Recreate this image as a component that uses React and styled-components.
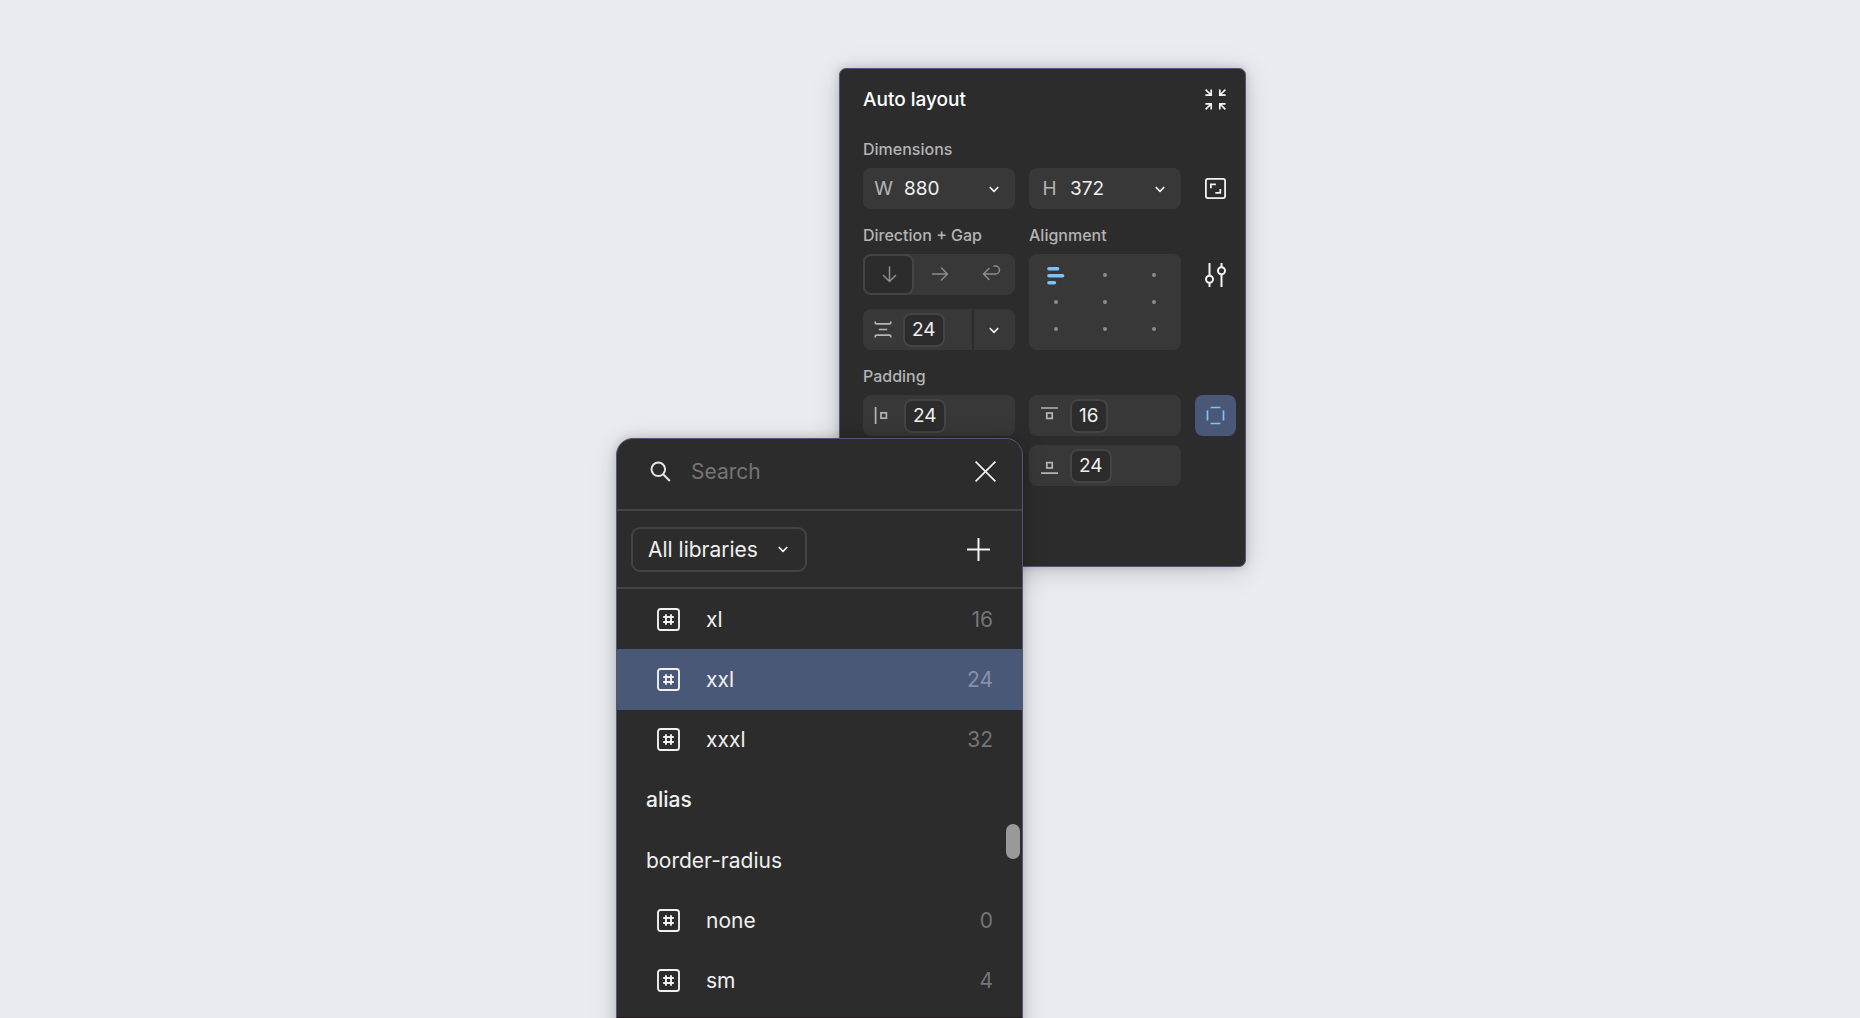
import React, { useState } from "react";
import styled, { createGlobalStyle, css } from "styled-components";

const color = {
  canvas: "#ebecf1",
  panel: "#2c2c2c",
  field: "#383838",
  line: "#444444",
  outline: "#56547a",
  text: "#f0f0f0",
  label: "#b4b4b4",
  muted: "#757575",
  icon: "#8c8c8c",
  selected: "#4a5878",
  accent: "#7cc4f8",
};

const GlobalStyle = createGlobalStyle`
  *, *::before, *::after { box-sizing: border-box; }
  body {
    margin: 0;
    background: ${color.canvas};
    font-family: Inter, "Liberation Sans", sans-serif;
    color: ${color.text};
  }
  button, input, select { font: inherit; color: inherit; }
  svg { display: block; flex: none; }
`;

const Canvas = styled.main`
  height: 100vh;
  overflow: hidden;
  padding-top: 68px;
  background: ${color.canvas};
`;

/* Both windows share one grid cell so that the picker overlaps the panel. */
const Stage = styled.div`
  display: grid;
  width: 632px;
  margin: 0 auto;
  padding-left: 2px;
`;

const windowFrame = css`
  grid-area: 1 / 1;
  width: 407px;
  background: ${color.panel};
  border: 1px solid ${color.outline};
  box-shadow: 0 4px 28px rgba(0, 0, 0, 0.16), 0 0 10px rgba(0, 0, 0, 0.16);
`;

const Panel = styled.section`
  ${windowFrame}
  justify-self: end;
  align-self: start;
  display: flex;
  flex-direction: column;
  gap: 7px;
  padding: 0 9px 80px 23px;
  border-radius: 7px;
`;

const PanelHeader = styled.header`
  display: flex;
  align-items: center;
  justify-content: space-between;
  height: 60px;
  margin-bottom: -6px;
`;

const Title = styled.h2`
  margin: 0;
  font-size: 19px;
  font-weight: 500;
  color: #ffffff;
`;

const Columns = styled.div`
  display: grid;
  grid-template-columns: minmax(0, 1fr) minmax(0, 1fr) 41px;
  column-gap: 14px;
`;

const Group = styled.div`
  display: flex;
  flex-direction: column;
  gap: ${(p) => p.$gap || 0}px;
`;

const Label = styled.div`
  height: 38px;
  font-size: 16px;
  line-height: 38px;
  font-weight: 500;
  white-space: nowrap;
  color: ${color.label};
`;

const Spacer = styled.div`
  height: 38px;
`;

const iconButton = css`
  display: flex;
  align-items: center;
  justify-content: center;
  padding: 0;
  border: 0;
  background: none;
  cursor: pointer;
`;

const IconButton = styled.button`
  ${iconButton}
  width: 41px;
  height: 41px;
  border-radius: 8px;
  color: ${(p) => (p.$active ? color.accent : "#f2f2f2")};
  background: ${(p) => (p.$active ? color.selected : "none")};
`;

const Field = styled.div`
  display: flex;
  align-items: center;
  height: 41px;
  overflow: hidden;
  border-radius: 8px;
  background: ${color.field};
`;

const Prefix = styled.label`
  display: flex;
  flex: none;
  justify-content: center;
  width: 41px;
  font-size: 19px;
  color: ${color.label};
`;

const NumberInput = styled.input`
  flex: 1;
  width: 0;
  min-width: 0;
  padding: 0;
  border: 0;
  outline: 0;
  background: none;
  font-size: 19px;
`;

const FieldMenu = styled.button`
  ${iconButton}
  flex: none;
  width: 43px;
  height: 41px;
  padding-right: 2px;
  border-left: 2px solid ${(p) => (p.$divided ? color.panel : "transparent")};
  margin-left: auto;
`;

const Token = styled.button`
  height: 34px;
  padding: 0 7px;
  border: 2px solid ${color.line};
  border-radius: 8px;
  background: ${color.panel};
  font-size: 19px;
  line-height: 30px;
  cursor: pointer;
`;

const Segments = styled.div`
  display: grid;
  grid-template-columns: repeat(3, 1fr);
  height: 41px;
  border-radius: 8px;
  background: ${color.field};
`;

const Segment = styled.button`
  ${iconButton}
  padding-left: 2px;
  border: 2px solid ${(p) => (p.$active ? color.line : "transparent")};
  border-radius: 8px;
  background: ${(p) => (p.$active ? color.panel : "none")};
  color: ${color.icon};
`;

const AlignGrid = styled.div`
  display: grid;
  grid-template-columns: repeat(3, 1fr);
  grid-template-rows: repeat(3, 1fr);
  height: 96px;
  padding: 8px 2px;
  border-radius: 8px;
  background: ${color.field};
`;

const AlignCell = styled.button`
  ${iconButton}
`;

const Dot = styled.span`
  width: 4px;
  height: 4px;
  border-radius: 2px;
  background: ${color.icon};
`;

const Picker = styled.section`
  ${windowFrame}
  justify-self: start;
  margin-top: 370px;
  border-radius: 17px;
  overflow: hidden;
`;

const SearchBar = styled.div`
  display: flex;
  align-items: center;
  height: 72px;
  padding: 0 16px 6px 33px;
  border-bottom: 2px solid ${color.line};
`;

const SearchLabel = styled.label`
  display: flex;
  width: 41px;
  color: #e4e4e4;
`;

const SearchInput = styled.input`
  flex: 1;
  min-width: 0;
  padding: 0;
  border: 0;
  outline: 0;
  background: none;
  font-size: 21px;
  &::placeholder { color: ${color.muted}; opacity: 1; }
`;

const ToolBar = styled.div`
  display: flex;
  align-items: center;
  justify-content: space-between;
  height: 78px;
  padding: 0 23px 0 14px;
  border-bottom: 2px solid ${color.line};
`;

const SelectBox = styled.div`
  display: grid;
  align-items: center;
  width: 176px;
  height: 45px;
  border: 2px solid ${color.line};
  border-radius: 9px;

  > * { grid-area: 1 / 1; }
  > svg { justify-self: end; margin-right: 14px; pointer-events: none; }
`;

const Select = styled.select`
  width: 100%;
  height: 100%;
  padding: 0 40px 0 15px;
  border: 0;
  outline: 0;
  background: none;
  appearance: none;
  font-size: 21px;
`;

const List = styled.ul`
  position: relative;
  display: grid;
  grid-auto-rows: 1fr;
  height: 422px;
  margin: 0;
  padding: 0;
  list-style: none;
`;

const Row = styled.li`
  display: flex;
  background: ${(p) => (p.$selected ? color.selected : "none")};
`;

const RowButton = styled.button`
  display: flex;
  flex: 1;
  align-items: center;
  padding: 0 29px 0 40px;
  border: 0;
  background: none;
  font-size: 21px;
  text-align: left;
  cursor: pointer;

  > svg { margin-right: 26px; }
`;

const Value = styled.span`
  margin-left: auto;
  color: ${(p) => (p.$selected ? "#8791a6" : color.muted)};
`;

const GroupName = styled.h3`
  margin: 0;
  align-self: center;
  padding-left: 29px;
  font-size: 21px;
  font-weight: ${(p) => (p.$strong ? 500 : 400)};
`;

const ScrollThumb = styled.li`
  position: absolute;
  top: 235px;
  right: 2px;
  width: 14px;
  height: 35px;
  border-radius: 7px;
  background: #999999;
`;

const Footer = styled.footer`
  height: 60px;
  margin-top: 6px;
  border-top: 1px solid #231d20;
`;

const Svg = ({ w, h = w, sw = 2, children, ...rest }) => (
  <svg width={w} height={h} viewBox={`0 0 ${w} ${h}`} fill="none" stroke="currentColor" strokeWidth={sw} aria-hidden="true" {...rest}>
    {children}
  </svg>
);

const Chevron = () => (
  <Svg w={16} sw={1.7} strokeLinecap="round" strokeLinejoin="round"><path d="M4.2 6.5l3.8 3.8 3.8-3.8" /></Svg>
);

const CollapseIcon = () => (
  <Svg w={21} sw={1.7}>
    <path d="M.6.6l5.4 5.4M6.2.4v5.8H.4M20.4.6L15 6M14.8.4v5.8h5.8M.6 20.4L6 15M6.2 20.6v-5.8H.4M20.4 20.4L15 15M14.8 20.6v-5.8h5.8" />
  </Svg>
);

const ResizeIcon = () => (
  <Svg w={21} sw={1.8}>
    <rect x="0.9" y="0.9" width="19.2" height="19.2" rx="2" />
    <path d="M5.9 10.2V6.4h5M10.3 14.8h5v-3.9" />
  </Svg>
);

const SlidersIcon = () => (
  <Svg w={21} h={24} sw={2}>
    <path d="M4.5 0v12.5M4.5 20v4M16.5 0v4M16.5 11.5V24" />
    <circle cx="4.5" cy="16.2" r="3.5" />
    <circle cx="16.5" cy="7.8" r="3.5" />
  </Svg>
);

const SidesIcon = () => (
  <Svg w={19} sw={1.7}>
    <path d="M4.6 1.5h9.8M4.6 17.5h9.8M1.5 4.6v9.8M17.5 4.6v9.8" />
  </Svg>
);

const DownIcon = () => (
  <Svg w={17} sw={1.5} strokeLinecap="round" strokeLinejoin="round"><path d="M8.5 1v14.5M2.5 9.5l6 6 6-6" /></Svg>
);

const RightIcon = () => (
  <Svg w={17} sw={1.5} strokeLinecap="round" strokeLinejoin="round"><path d="M1.5 8h15M10.5 2l6 6-6 6" /></Svg>
);

const WrapIcon = () => (
  <Svg w={21} h={19} sw={1.5} strokeLinecap="round" strokeLinejoin="round">
    <path d="M3.5 9H15.5a4 4 0 0 0 0-8H14M9 3.5L3.5 9l5.5 5.5" />
  </Svg>
);

const GapIcon = () => (
  <Svg w={40} sw={1.7} color={color.label}>
    <path d="M12.2 11.5v1q0 1.4 1.4 1.4h12.8q1.4 0 1.4-1.4v-1M12.2 27.5v-1q0-1.4 1.4-1.4h12.8q1.4 0 1.4 1.4v1M15.8 19.5h8.4" />
  </Svg>
);

const paddingPaths = {
  left: <><path d="M12.6 12v17" /><rect x="18" y="17.8" width="5.4" height="5.4" /></>,
  top: <><path d="M12 13h17" /><rect x="17.8" y="18" width="5.4" height="5.4" /></>,
  bottom: <><path d="M12 28.2h17" /><rect x="17.8" y="17.6" width="5.4" height="5.4" /></>,
  right: <><path d="M28.4 12v17" /><rect x="17.8" y="17.8" width="5.4" height="5.4" /></>,
};

const AlignBars = () => (
  <Svg w={18} h={20} sw={3.6} color={color.accent} strokeLinecap="round"><path d="M2 3.8h8.6M2 10.8h13.6M2 17.7h5.4" /></Svg>
);

const SearchIcon = () => (
  <Svg w={21} sw={2}><circle cx="8.3" cy="8.3" r="6.8" /><path d="M13.2 13.2l6.6 6.8" /></Svg>
);

const CloseIcon = () => (
  <Svg w={21} sw={1.7}><path d="M.6.6l19.8 19.8M20.4.6L.6 20.4" /></Svg>
);

const PlusIcon = () => (
  <Svg w={23} sw={2}><path d="M11.5 0v23M0 11.5h23" /></Svg>
);

const HashIcon = () => (
  <Svg w={23} sw={1.9}>
    <rect x="1" y="1" width="21" height="21" rx="2.6" />
    <path d="M9 6.2v10.6M14 6.2v10.6M6.2 9h10.6M6.2 14h10.6" />
  </Svg>
);

const Dimension = ({ id, name, letter, value }) => (
  <Field>
    <Prefix htmlFor={id}>{letter}</Prefix>
    <NumberInput id={id} defaultValue={value} aria-label={name} />
    <FieldMenu aria-label={`${name} options`}><Chevron /></FieldMenu>
  </Field>
);

const PaddingField = ({ side, value }) => (
  <Field>
    <Svg w={41} sw={1.7} color={color.label}>{paddingPaths[side]}</Svg>
    <Token aria-label={`Padding ${side}`}>{value}</Token>
  </Field>
);

const directions = [
  ["Vertical", DownIcon],
  ["Horizontal", RightIcon],
  ["Wrap", WrapIcon],
];

const spots = ["Top left", "Top center", "Top right", "Left", "Center", "Right", "Bottom left", "Bottom center", "Bottom right"];

const items = [
  { name: "xl", value: 16 },
  { name: "xxl", value: 24 },
  { name: "xxxl", value: 32 },
  { group: "alias", strong: true },
  { group: "border-radius" },
  { name: "none", value: 0 },
  { name: "sm", value: 4 },
];

export default function App() {
  const [direction, setDirection] = useState("Vertical");
  const [spot, setSpot] = useState("Top left");
  const [selected, setSelected] = useState("xxl");

  return (
    <Canvas>
      <GlobalStyle />
      <Stage>
        <Panel aria-label="Auto layout">
          <PanelHeader>
            <Title>Auto layout</Title>
            <IconButton aria-label="Collapse"><CollapseIcon /></IconButton>
          </PanelHeader>

          <Columns>
            <Group>
              <Label>Dimensions</Label>
              <Dimension id="width" name="Width" letter="W" value="880" />
            </Group>
            <Group>
              <Spacer />
              <Dimension id="height" name="Height" letter="H" value="372" />
            </Group>
            <Group>
              <Spacer />
              <IconButton aria-label="Resize to fit"><ResizeIcon /></IconButton>
            </Group>
          </Columns>

          <Columns>
            <Group>
              <Label>Direction + Gap</Label>
              <Group $gap={14}>
                <Segments>
                  {directions.map(([name, Icon]) => (
                    <Segment key={name} aria-label={name} aria-pressed={direction === name} $active={direction === name} onClick={() => setDirection(name)}>
                      <Icon />
                    </Segment>
                  ))}
                </Segments>
                <Field>
                  <GapIcon />
                  <Token aria-label="Gap">24</Token>
                  <FieldMenu $divided aria-label="Gap options"><Chevron /></FieldMenu>
                </Field>
              </Group>
            </Group>
            <Group>
              <Label>Alignment</Label>
              <AlignGrid>
                {spots.map((name) => (
                  <AlignCell key={name} aria-label={name} aria-pressed={spot === name} onClick={() => setSpot(name)}>
                    {spot === name ? <AlignBars /> : <Dot />}
                  </AlignCell>
                ))}
              </AlignGrid>
            </Group>
            <Group>
              <Spacer />
              <IconButton aria-label="Auto layout settings"><SlidersIcon /></IconButton>
            </Group>
          </Columns>

          <Columns>
            <Group>
              <Label>Padding</Label>
              <Group $gap={9}>
                <PaddingField side="left" value={24} />
                <PaddingField side="right" value={24} />
              </Group>
            </Group>
            <Group>
              <Spacer />
              <Group $gap={9}>
                <PaddingField side="top" value={16} />
                <PaddingField side="bottom" value={24} />
              </Group>
            </Group>
            <Group>
              <Spacer />
              <IconButton $active aria-label="Individual padding"><SidesIcon /></IconButton>
            </Group>
          </Columns>
        </Panel>

        <Picker aria-label="Variables">
          <SearchBar>
            <SearchLabel htmlFor="search" aria-label="Search"><SearchIcon /></SearchLabel>
            <SearchInput id="search" placeholder="Search" />
            <IconButton aria-label="Close"><CloseIcon /></IconButton>
          </SearchBar>
          <ToolBar>
            <SelectBox>
              <Select aria-label="Library" defaultValue="all">
                <option value="all">All libraries</option>
              </Select>
              <Chevron />
            </SelectBox>
            <IconButton aria-label="Create variable"><PlusIcon /></IconButton>
          </ToolBar>
          <List>
            {items.map((item) =>
              item.group ? (
                <Row key={item.group}><GroupName $strong={item.strong}>{item.group}</GroupName></Row>
              ) : (
                <Row key={item.name} $selected={selected === item.name}>
                  <RowButton onClick={() => setSelected(item.name)}>
                    <HashIcon />
                    {item.name}
                    <Value $selected={selected === item.name}>{item.value}</Value>
                  </RowButton>
                </Row>
              )
            )}
            <ScrollThumb aria-hidden="true" />
          </List>
          <Footer />
        </Picker>
      </Stage>
    </Canvas>
  );
}
